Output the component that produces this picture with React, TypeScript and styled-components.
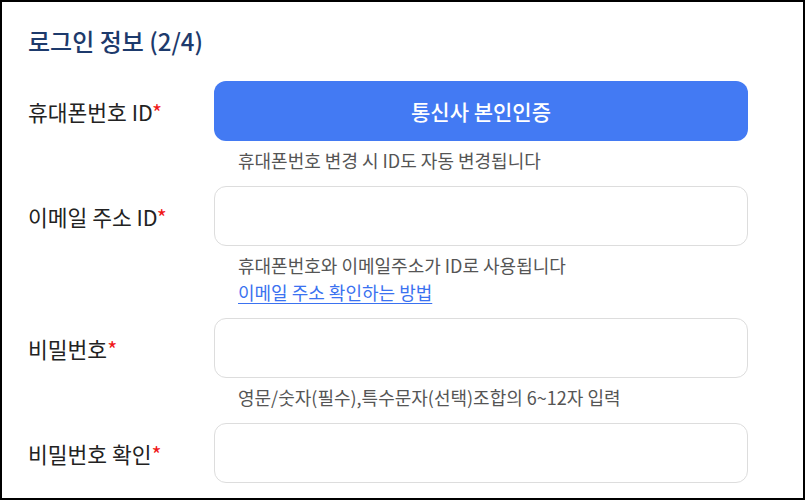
import React from "react";
import styled, { createGlobalStyle } from "styled-components";

const Global = createGlobalStyle`
  html, body { margin: 0; padding: 0; background: #fff; }
  body { font-family: "Noto Sans CJK KR", "Noto Sans", sans-serif; }
  * { box-sizing: border-box; }
`;

const Frame = styled.div`
  width: 805px;
  height: 500px;
  border: 2px solid #000;
  padding: 21px 55px 0 26px;
  overflow: hidden;
  background: #fff;
`;

const Title = styled.h2`
  margin: 0 0 22px 0;
  font-size: 24px;
  line-height: 36px;
  font-weight: 500;
  color: #1d3a6c;
`;

const Row = styled.div`
  display: grid;
  grid-template-columns: 186px 1fr;
  align-items: center;
`;

const Label = styled.div`
  font-size: 21.5px;
  color: #222;
  font-weight: 400;
`;

const Star = styled.span`
  color: #f01818;
`;

const PrimaryButton = styled.button`
  height: 60px;
  width: 100%;
  border: none;
  border-radius: 12px;
  background: #437af3;
  color: #fff;
  font-family: inherit;
  font-size: 21px;
  font-weight: 500;
  cursor: pointer;
`;

const Input = styled.input`
  height: 60px;
  width: 100%;
  border: 1px solid #dddddd;
  border-radius: 12px;
  background: #fff;
  padding: 0 16px;
  font-family: inherit;
  font-size: 17px;
  outline: none;
`;

const Help = styled.div`
  margin-left: 186px;
  padding: 6px 0 12px 24px;
  display: flex;
  flex-direction: column;
`;

const HelpText = styled.span`
  font-size: 18px;
  line-height: 27px;
  color: #555;
`;

const HelpLink = styled.a`
  font-size: 18px;
  line-height: 27px;
  color: #3b72f0;
  text-decoration: underline;
  text-underline-offset: 3px;
  align-self: flex-start;
`;

export default function App() {
  return (
    <>
      <Global />
      <Frame>
        <Title>로그인 정보 (2/4)</Title>
        <Row>
          <Label>
            휴대폰번호 ID<Star>*</Star>
          </Label>
          <PrimaryButton>통신사 본인인증</PrimaryButton>
        </Row>
        <Help>
          <HelpText>휴대폰번호 변경 시 ID도 자동 변경됩니다</HelpText>
        </Help>
        <Row>
          <Label>
            이메일 주소 ID<Star>*</Star>
          </Label>
          <Input type="text" />
        </Row>
        <Help>
          <HelpText>휴대폰번호와 이메일주소가 ID로 사용됩니다</HelpText>
          <HelpLink href="#">이메일 주소 확인하는 방법</HelpLink>
        </Help>
        <Row>
          <Label>
            비밀번호<Star>*</Star>
          </Label>
          <Input type="password" />
        </Row>
        <Help>
          <HelpText>영문/숫자(필수),특수문자(선택)조합의 6~12자 입력</HelpText>
        </Help>
        <Row>
          <Label>
            비밀번호 확인<Star>*</Star>
          </Label>
          <Input type="password" />
        </Row>
      </Frame>
    </>
  );
}
